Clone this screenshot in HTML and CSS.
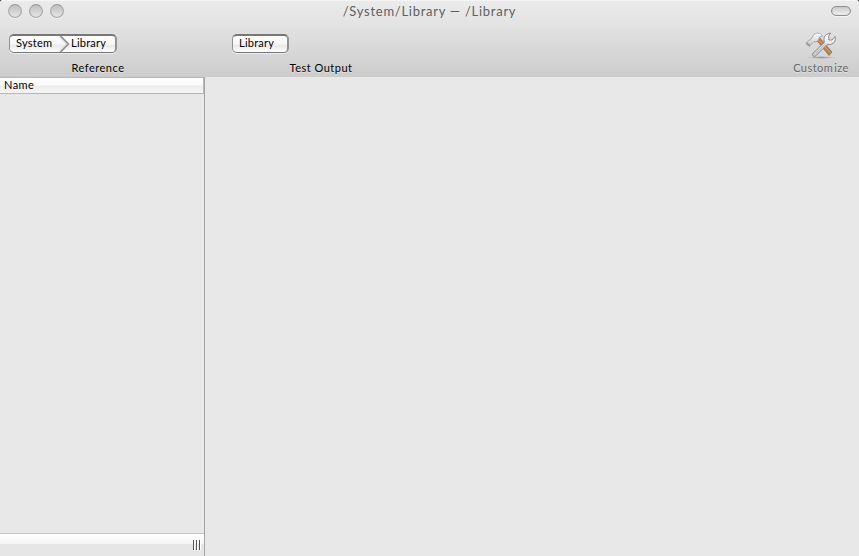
FILE: index.html
```html
<!DOCTYPE html>
<html lang="en">
<head>
<meta charset="utf-8">
<title>/System/Library — /Library</title>
<link rel="stylesheet" href="styles.css">
</head>
<body>
<div class="window">
  <header class="chrome">
    <div class="titlebar">
      <div class="lights"><i></i><i></i><i></i></div>
      <h1>/System/Library — /Library</h1>
      <div class="toolbar-toggle"></div>
    </div>
    <div class="toolbar">
      <div class="item">
        <div class="path">
          <span class="first">System</span>
          <svg class="chevron" width="10" height="16" viewBox="0 0 10 16"><path d="M0 0L7.5 8L0 16" fill="none" stroke="#ddd" stroke-width="3"/><path d="M.5 0L8.5 8L.5 16" fill="none" stroke="#888" stroke-width="1.3"/></svg>
          <span>Library</span>
        </div>
        <div class="label">Reference</div>
      </div>
      <div class="item">
        <div class="path single"><span>Library</span></div>
        <div class="label">Test Output</div>
      </div>
      <div class="customize">
        <svg width="32" height="28" viewBox="0 0 32 28">
          <defs>
            <linearGradient id="metal" x1="0" y1="0" x2="0" y2="1"><stop offset="0" stop-color="#fff"/><stop offset="1" stop-color="#c8c8c8"/></linearGradient>
            <radialGradient id="shade"><stop offset="0" stop-color="#777" stop-opacity=".7"/><stop offset="1" stop-color="#888" stop-opacity="0"/></radialGradient>
          </defs>
          <ellipse cx="16" cy="26.5" rx="15" ry="1.5" fill="url(#shade)"/>
          <path d="M11 8.5L14.5 6.5L27 21L24 24.5Z" fill="#b5834f" stroke="#8a6a50" stroke-width=".7"/>
          <path d="M13.5 9L25 21.5" stroke="#d3a77a" stroke-width="1"/>
          <path d="M1.5 11.5L7 7Q8 2.5 12 2Q16 1.5 17.5 5L14.5 6L13.5 9L11 11L9 10.5L5 14.5Z" fill="url(#metal)" stroke="#999" stroke-width=".8"/>
          <path d="M1.5 11L5.5 14.5L4.5 16L.8 13Z" fill="#999"/>
          <path d="M8.2 22L19.3 11.5Q18 5.5 21.5 3.5L25.5 2L23.5 5.5L24 9L27 9L30 5.5Q31.5 11 26.5 13.2Q24 14 22 13.5L11 24.8Q9.5 26 8 25Q6.8 23.5 8.2 22Z" fill="url(#metal)" stroke="#8b8b8b" stroke-width="1"/>
          <path d="M11 22L20.5 12.8" stroke="#aaa" stroke-width=".8"/>
        </svg>
        <div class="label">Custom<span class="gap"></span>ize</div>
      </div>
    </div>
  </header>
  <main>
    <aside>
      <div class="column-header">Name</div>
      <div class="list"></div>
      <div class="footer"><div class="grip"><i></i><i></i><i></i></div></div>
    </aside>
    <section></section>
  </main>
</div>
</body>
</html>
```

FILE: styles.css
```css
* { box-sizing: border-box; }
body { margin: 0; background: #000; font: 11px/13px Lato, "Open Sans", sans-serif; color: #000; }
.window { height: 556px; display: flex; flex-direction: column; }
.chrome {
  height: 77px;
  flex: none;
  background: linear-gradient(#ebebeb, #e3e3e3 24px, #cccccc);
  border-top: 1px solid #f5f5f5;
  border-radius: 2px 2px 0 0;
}
.titlebar { height: 20px; display: grid; grid-template-columns: 100px 1fr 100px; align-items: center; }
.lights { display: flex; gap: 7px; padding-left: 8px; }
.lights i {
  width: 14px; height: 14px;
  border-radius: 50%;
  border: 1px solid #aaa;
  border-top-color: #999;
  background: linear-gradient(#c2c2c2, #cfcfcf 45%, #e8e8e8);
  box-shadow: 0 1px #f2f2f2, inset 0 0 1px #aaa;
}
h1 { margin: 0; font-size: 13px; line-height: 20px; font-weight: 400; color: #606060; text-align: center; letter-spacing: .73px; white-space: nowrap; }
.toolbar-toggle {
  justify-self: end;
  width: 20px; height: 10px;
  margin-right: 8px;
  border: 1px solid #919191;
  border-radius: 5px;
  background: linear-gradient(#ccc, #f0f0f0);
  box-shadow: 0 1px #f4f4f4, inset 0 0 1px #999;
}
.toolbar { display: flex; padding: 10px 9px 0 9px; }
.item { width: 178px; margin-right: 45px; padding-top: 3px; }
.path {
  display: flex;
  width: 108px; height: 19px;
  border: 1px solid #8c8c8c;
  border-width: 2px 2px 1px 1px;
  border-color: #777 #929292 #777 #929292;
  border-radius: 5px;
  background: linear-gradient(#fff, #f6f6f6 50%, #e9e9e9 60%, #fff);
  box-shadow: 0 1px #eee;
  line-height: 14px;
  letter-spacing: .25px;
  padding-left: 6px;
  white-space: nowrap;
}
.path .first { width: 43px; letter-spacing: .25px; }
.chevron { width: 12px; height: 16px; flex: none; }
.path.single { width: 57px; padding-left: 6px; }
.label { text-align: center; letter-spacing: .5px; white-space: nowrap; text-shadow: 0 1px #e3e3e3; }
.item .label { margin-top: 8px; }
.customize { width: 58px; margin-left: auto; color: #666; }
.customize svg { display: block; margin: 0 auto; width: 32px; height: 28px; }
.customize .label { margin-top: 2px; letter-spacing: .45px; }
.gap { display: inline-block; width: 1px; }
main { flex: 1; display: flex; background: #e8e8e8; }
aside { width: 205px; border-right: 1px solid #a5a5a5; display: flex; flex-direction: column; }
.column-header {
  height: 17px;
  padding-left: 4px;
  border: 1px solid #b5b5b5;
  border-left: 0;
  background: linear-gradient(#fff, #fafafa 45%, #ededed 55%, #f5f5f5);
  line-height: 13px;
  letter-spacing: .45px;
}
.list { flex: 1; }
.footer {
  height: 23px;
  border-top: 1px solid #c5c5c5;
  background: linear-gradient(#fff, #f5f5f5 10px, #e6e6e6 10px, #e6e6e6);
  display: flex;
  justify-content: flex-end;
  padding: 6px 4px 0;
}
.grip { display: flex; gap: 2px; }
.grip i { width: 1px; height: 10px; background: #555; box-shadow: 1px 0 #fff; }
section { flex: 1; }
```
